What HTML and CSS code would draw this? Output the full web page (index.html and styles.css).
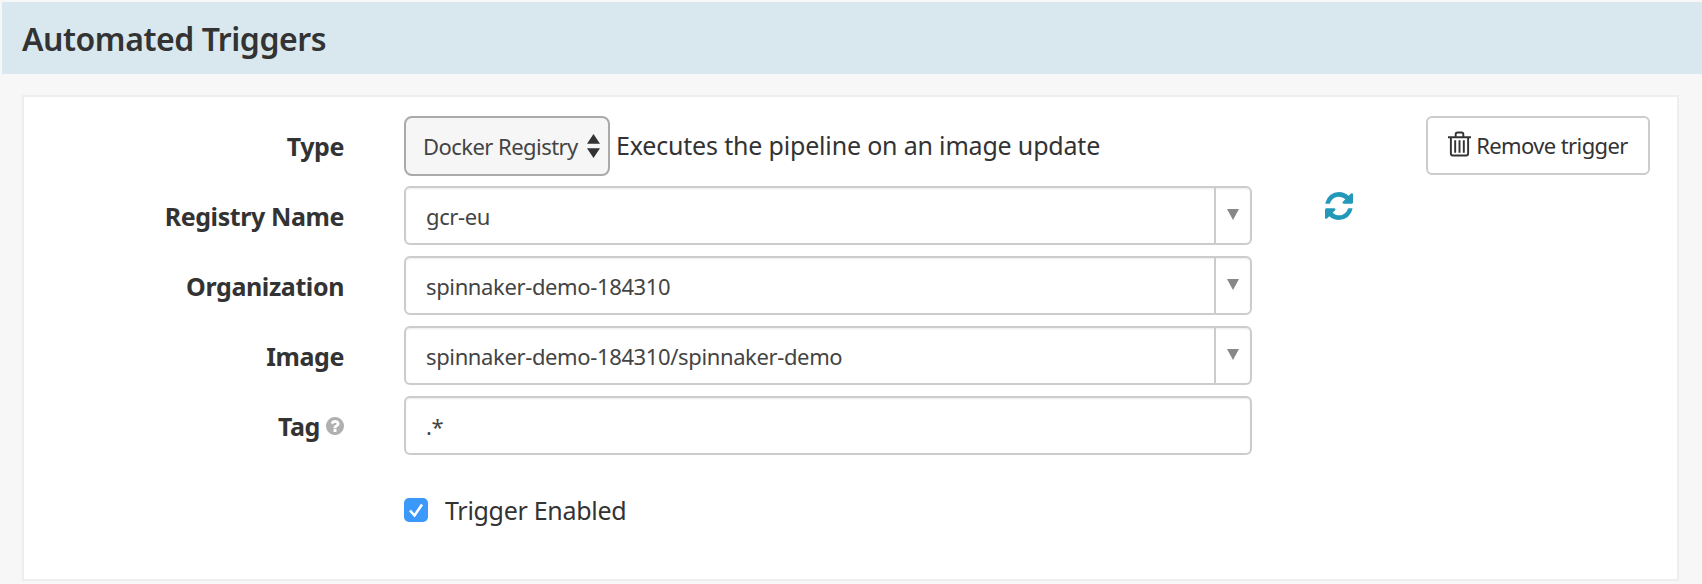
FILE: index.html
```html
<!DOCTYPE html>
<html lang="en">
<head>
<meta charset="utf-8">
<title>Automated Triggers</title>
<link rel="stylesheet" href="styles.css">
</head>
<body>
<header class="section-head"><h1>Automated Triggers</h1></header>
<main class="panel">
  <div class="row row-type">
    <div class="label">Type</div>
    <div class="type-select"><span>Docker Registry</span>
      <svg class="updown" viewBox="0 0 12 22"><path d="M6 0l6 9H0zM6 22l-6-9h12z"/></svg>
    </div>
    <div class="desc">Executes the pipeline on an image update</div>
    <button class="remove">
      <svg class="trash" viewBox="0 0 24 26"><g fill="none" stroke="currentColor" stroke-width="2"><path d="M0 6h24M8 6V3Q8 1 10 1h4q2 0 2 2v3M3 6v17q0 2 2 2h14q2 0 2-2V6"/><path d="M7.500 9v13M12 9v13M16.500 9v13" stroke-width="2"/></g></svg>
      <span>Remove trigger</span></button>
  </div>
  <div class="row">
    <div class="label">Registry Name</div>
    <div class="field combo"><span class="value">gcr-eu</span><span class="caret"></span></div>
    <svg class="refresh" viewBox="128 128 1536 1536"><path d="M1639 1056q0 5-1 7-64 268-268 434.500t-478 166.500q-146 0-282.500-55t-243.500-157l-129 129q-19 19-45 19t-45-19-19-45v-448q0-26 19-45t45-19h448q26 0 45 19t19 45-19 45l-137 137q71 66 161 102t187 36q134 0 250-65t186-179q11-17 53-117 8-23 30-23h192q13 0 22.500 9.500t9.500 22.500zm25-800v448q0 26-19 45t-45 19h-448q-26 0-45-19t-19-45 19-45l138-138q-148-137-349-137-134 0-250 65t-186 179q-11 17-53 117-8 23-30 23h-199q-13 0-22.500-9.500t-9.500-22.500v-7q65-268 270-434.500t480-166.500q146 0 284 55.500t245 156.500l130-129q19-19 45-19t45 19 19 45z"/></svg>
  </div>
  <div class="row">
    <div class="label">Organization</div>
    <div class="field combo"><span class="value">spinnaker-demo-184310</span><span class="caret"></span></div>
  </div>
  <div class="row">
    <div class="label">Image</div>
    <div class="field combo"><span class="value">spinnaker-demo-184310/spinnaker-demo</span><span class="caret"></span></div>
  </div>
  <div class="row">
    <div class="label">Tag
      <svg class="help" viewBox="128 128 1536 1536"><path d="M1024 1376v-192q0-14-9-23t-23-9h-192q-14 0-23 9t-9 23v192q0 14 9 23t23 9h192q14 0 23-9t9-23zm256-672q0-88-55.500-163t-138.500-116-170-41q-243 0-371 213-15 24 8 42l132 100q7 6 19 6 16 0 25-12 53-68 86-92 34-24 86-24 48 0 85.500 26t37.500 59q0 38-20 61t-68 45q-63 28-115.500 86.500t-52.500 125.500v36q0 14 9 23t23 9h192q14 0 23-9t9-23q0-19 21.500-49.500t54.500-49.500q32-18 49-28.500t46-35 44.500-48 28-60.500 12.500-81zm384 192q0 209-103 385.500t-279.500 279.500-385.500 103-385.500-103-279.500-279.500-103-385.500 103-385.500 279.500-279.500 385.500-103 385.500 103 279.500 279.500 103 385.500z"/></svg>
    </div>
    <div class="field"><span class="value">.*</span></div>
  </div>
  <div class="row row-check">
    <div class="label"></div>
    <span class="checkbox"><svg viewBox="0 0 24 24"><path d="M6 12.500l4.500 5 7.500-11" fill="none" stroke="#fff" stroke-width="2.600"/></svg></span>
    <span class="check-label">Trigger Enabled</span>
  </div>
</main>
</body>
</html>
```
FILE: styles.css
```css
* { box-sizing: border-box; }
html, body { height: 100%; }
body {
  margin: 0;
  padding: 2px 0 0 2px;
  background: #f7f7f7;
  color: #333;
  font-family: "Noto Sans", "Open Sans", sans-serif;
  overflow: hidden;
}
.section-head {
  height: 72px;
  background: #d9e8ee;
  display: flex;
  align-items: center;
  padding-left: 20px;
}
.section-head h1 {
  margin: 0;
  font-size: 32px;
  font-weight: 600;
  letter-spacing: -0.45px;
  color: #333;
}
.panel {
  margin: 21px 23px 0 20px;
  height: 486px;
  background: #fff;
  border: 2px solid #eee;
  padding: 19px 0 0 0;
  display: flex;
  flex-direction: column;
  gap: 11px;
}
.row {
  display: flex;
  align-items: center;
  height: 59px;
}
.label {
  width: 320px;
  margin-right: 60px;
  flex: none;
  text-align: right;
  font-size: 25px;
  font-weight: 700;
  letter-spacing: -0.4px;
  display: flex;
  justify-content: flex-end;
  align-items: center;
  gap: 6px;
}
.type-select {
  width: 206px;
  height: 60px;
  border: 2px solid #aaa;
  border-radius: 8px;
  background: #f6f6f6;
  display: flex;
  align-items: center;
  padding-left: 17px;
  font-size: 22px;
  letter-spacing: -0.55px;
  color: #444;
  flex: none;
}
.updown { width: 13px; height: 24px; margin-left: 9px; fill: #333; }
.desc {
  margin-left: 6px;
  font-size: 25px;
  letter-spacing: -0.18px;
  color: #333;
  margin-top: -2px;
}
.remove {
  margin-left: auto;
  margin-right: 27px;
  width: 224px;
  height: 59px;
  border: 2px solid #ccc;
  border-radius: 6px;
  background: #fff;
  color: #333;
  font-family: inherit;
  font-size: 22px;
  letter-spacing: -0.6px;
  display: flex;
  align-items: center;
  justify-content: center;
  gap: 5px;
  padding: 0 0 2px;
}
.trash { width: 23px; height: 26px; margin-top: -2px; }
.field {
  width: 848px;
  height: 59px;
  border: 2px solid #ccc;
  border-radius: 6px;
  box-shadow: inset 0 1px 2px rgba(0,0,0,.08);
  display: flex;
  align-items: center;
  background: #fff;
  padding-left: 20px;
  font-size: 22px;
  letter-spacing: -0.37px;
  color: #444;
  position: relative;
  flex: none;
}
.value { flex: 1; }
.caret {
  width: 36px;
  height: 100%;
  border-left: 2px solid #ccc;
  display: flex;
  align-items: center;
  justify-content: center;
}
.caret::after {
  content: "";
  border-style: solid;
  border-width: 11px 6.500px 0;
  border-color: #888 transparent transparent;
  margin-top: -2px;
}
.refresh { width: 28px; height: 28px; fill: #2299b8; margin: -20px 0 0 73px; }
.help { width: 18px; height: 18px; fill: #b0b0b0; margin-right: 0; }
.row-check { margin-top: 32px; height: 24px; }
.checkbox {
  width: 24px;
  height: 24px;
  border-radius: 5px;
  background: #3b99fc;
  flex: none;
  display: flex;
}
.check-label {
  margin-left: 17px;
  font-size: 25px;
  letter-spacing: -0.3px;
  color: #333;
}
```
